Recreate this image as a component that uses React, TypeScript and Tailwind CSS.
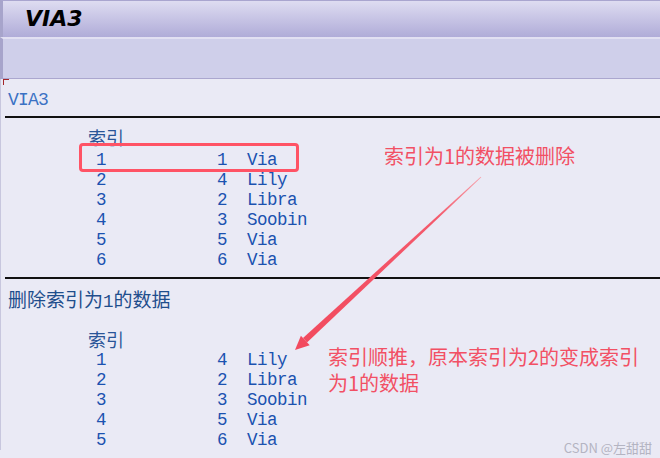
import React from 'react';

const before = [
  { idx: 1, num: 1, name: 'Via' },
  { idx: 2, num: 4, name: 'Lily' },
  { idx: 3, num: 2, name: 'Libra' },
  { idx: 4, num: 3, name: 'Soobin' },
  { idx: 5, num: 5, name: 'Via' },
  { idx: 6, num: 6, name: 'Via' },
];

const after = [
  { idx: 1, num: 4, name: 'Lily' },
  { idx: 2, num: 2, name: 'Libra' },
  { idx: 3, num: 3, name: 'Soobin' },
  { idx: 4, num: 5, name: 'Via' },
  { idx: 5, num: 6, name: 'Via' },
];

type Row = { idx: number; num: number; name: string };

const mono = "font-['Liberation_Mono','Noto_Sans_CJK_SC',monospace]";

const DataList = ({ rows, first }: { rows: Row[]; first?: boolean }) => (
  <div className="flex flex-col">
    <div className="pl-[83px] h-[20px] leading-[20px] text-[18px] text-[#2a5598] font-['Noto_Sans_CJK_SC',sans-serif]">
      索引
    </div>
    <div className={first ? 'mt-[3px]' : 'mt-[1px]'}>
      {rows.map((r) => (
        <div
          key={r.idx}
          className={`flex h-[20px] leading-[20px] text-[17.5px] tracking-[-0.5px] text-[#1b52b0] ${mono}`}
        >
          <span className="ml-[91px] w-[121px]">{r.idx}</span>
          <span className="w-[30px]">{r.num}</span>
          <span>{r.name}</span>
        </div>
      ))}
    </div>
  </div>
);

export default function App() {
  return (
    <div className="relative w-[660px] h-[458px] overflow-hidden bg-[#eaeaf5]">
      {/* title bar */}
      <div className="h-[37px] border-t border-t-[#a9a5cf] border-l-[3px] border-l-[#a7a4cb] bg-gradient-to-b from-[#dedcf1] to-[#b0acd8] flex items-center pl-[22px]">
        <span className="font-['DejaVu_Sans',sans-serif] font-bold italic text-[22px] leading-none text-black">
          VIA3
        </span>
      </div>
      {/* toolbar */}
      <div className="h-[42px] border-t-2 border-t-[#e2e0f2] border-b border-b-[#aba7cf] border-l-[3px] border-l-[#a7a4cb] bg-[#cfcfea]" />

      {/* list content */}
      <div className="relative border-l border-l-[#c8c7de] pl-[4px]">
        <div className="absolute left-[2px] top-0 w-[6px] h-[6px] border-t border-l border-[#a3262a]" />
        <div className={`pt-[11px] pl-[3px] h-[31px] leading-[20px] text-[18px] tracking-[-0.8px] text-[#3b72c4] ${mono}`}>
          VIA3
        </div>
        <div className="mt-[6px] h-[2px] bg-[#111]" />

        <div className="pt-[9px]">
          <DataList rows={before} first />
        </div>
        <div className="mt-[7px] h-[2px] bg-[#111]" />

        <div className="mt-[10px] pl-[3px] h-[20px] leading-[20px] text-[19px] text-[#1f4e8c] font-['Noto_Sans_CJK_SC',sans-serif]">
          删除索引为<span className={`${mono} text-[17.5px]`}>1</span>的数据
        </div>
        <div className="pt-[20px]">
          <DataList rows={after} />
        </div>
      </div>

      {/* annotations */}
      <div className="absolute left-[79px] top-[143px] w-[220px] h-[29px] rounded-[4px] border-[3px] border-[#ff5365]" />
      <div className="absolute left-[384px] top-[143px] leading-[26px] text-[20px] text-[#f25064] font-['Noto_Sans_CJK_SC',sans-serif]">
        索引为1的数据被删除
      </div>
      <div className="absolute left-[328px] top-[344px] leading-[26px] text-[20px] text-[#f25064] font-['Noto_Sans_CJK_SC',sans-serif]">
        索引顺推，原本索引为2的变成索引
        <br />
        为1的数据
      </div>
      <svg className="absolute left-0 top-0" width="660" height="458" viewBox="0 0 660 458">
        <defs>
          <linearGradient id="shaft" x1="481" y1="177" x2="305" y2="340" gradientUnits="userSpaceOnUse">
            <stop offset="0" stopColor="#f7a0aa" />
            <stop offset="0.25" stopColor="#f45a6c" />
            <stop offset="1" stopColor="#f24a5e" />
          </linearGradient>
        </defs>
        <polygon points="481.3,177.3 480.7,176.7 303,338 307,342.6" fill="url(#shaft)" />
        <polygon points="295,350 300.9,335.7 309.7,345.3" fill="#f24a5e" />
      </svg>
      <div className="absolute right-[8px] top-[439px] text-[13px] leading-[18px] text-[#b4b4c2] font-['Noto_Sans_CJK_SC',sans-serif]">
        CSDN @左甜甜
      </div>
    </div>
  );
}
